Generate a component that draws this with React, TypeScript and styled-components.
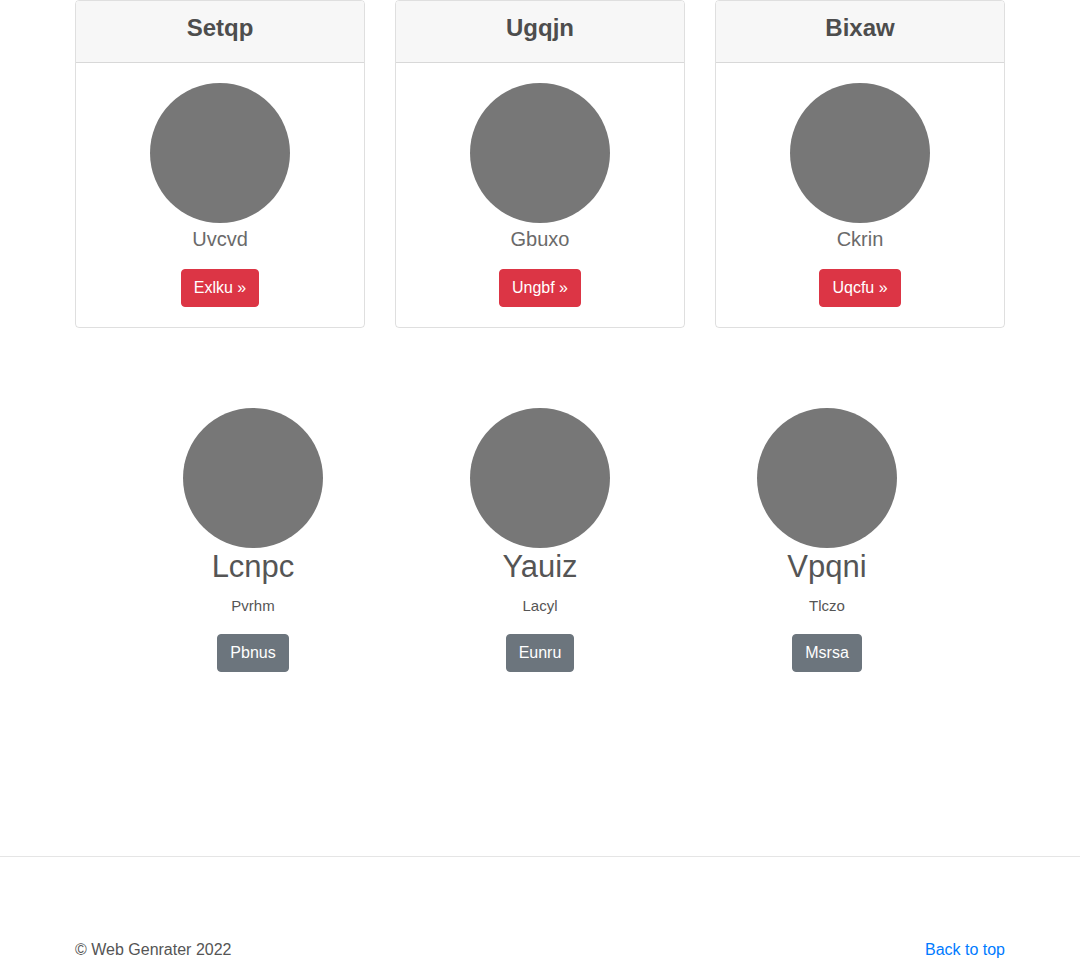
import React from 'react';
import styled, { createGlobalStyle } from 'styled-components';

const GlobalStyle = createGlobalStyle`
  html, body {
    margin: 0;
    padding: 0;
    background: #fff;
  }
  body {
    font-family: "Segoe UI", "Liberation Sans", Arial, sans-serif;
    font-size: 16px;
    line-height: 1.5;
    color: #555;
  }
  * {
    box-sizing: border-box;
  }
`;

const Container = styled.div`
  width: 960px;
  margin: 0 auto;
  padding: 0 15px;
`;

const CardDeck = styled.div`
  display: grid;
  grid-template-columns: repeat(3, 1fr);
  gap: 30px;
`;

const Card = styled.div`
  border: 1px solid rgba(0, 0, 0, 0.125);
  border-radius: 4px;
  overflow: hidden;
  text-align: center;
`;

const CardHeader = styled.div`
  background: #f7f7f7;
  border-bottom: 1px solid rgba(0, 0, 0, 0.125);
  padding: 13px 20px 11px;
`;

const CardTitle = styled.h4`
  margin: 0 0 8px;
  font-size: 24px;
  line-height: 1.2;
  font-weight: 700;
  color: #4d4d4d;
`;

const CardBody = styled.div`
  padding: 20px;
  display: flex;
  flex-direction: column;
  align-items: center;
`;

const Avatar = styled.div`
  width: 140px;
  height: 140px;
  border-radius: 50%;
  background: #777;
`;

const Lead = styled.p`
  margin: 0 0 16px;
  padding-top: 1px;
  height: 30px;
  font-size: 20px;
  line-height: 30px;
  font-weight: 300;
  color: #6a6a6a;
`;

const Button = styled.a<{ $variant: 'danger' | 'secondary' }>`
  display: inline-block;
  padding: 6px 12px;
  border: 1px solid ${p => (p.$variant === 'danger' ? '#dc3545' : '#6c757d')};
  border-radius: 4px;
  background: ${p => (p.$variant === 'danger' ? '#dc3545' : '#6c757d')};
  color: #fff;
  font-size: 16px;
  line-height: 1.5;
  text-decoration: none;
  cursor: pointer;
`;

const People = styled.div`
  display: grid;
  grid-template-columns: repeat(3, 287px);
  justify-content: center;
  margin-top: 80px;
`;

const Person = styled.div`
  display: flex;
  flex-direction: column;
  align-items: center;
  text-align: center;
`;

const PersonName = styled.h2`
  margin: 0 0 8px;
  font-size: 31px;
  line-height: 38px;
  font-weight: 400;
  color: #555;
`;

const PersonRole = styled.p`
  margin: 0 0 16px;
  font-size: 15px;
  line-height: 24px;
  color: #555;
`;

const Rule = styled.hr`
  margin: 184px 0 0;
  border: 0;
  border-top: 1px solid #e5e5e5;
`;

const Footer = styled.footer`
  display: flex;
  justify-content: space-between;
  padding: 81px 0 23px;
  font-size: 16px;
  color: #555;
`;

const TopLink = styled.a`
  color: #007bff;
  text-decoration: none;
`;

const cards = [
  { title: 'Setqp', name: 'Uvcvd', action: 'Exlku' },
  { title: 'Ugqjn', name: 'Gbuxo', action: 'Ungbf' },
  { title: 'Bixaw', name: 'Ckrin', action: 'Uqcfu' },
];

const people = [
  { name: 'Lcnpc', role: 'Pvrhm', action: 'Pbnus' },
  { name: 'Yauiz', role: 'Lacyl', action: 'Eunru' },
  { name: 'Vpqni', role: 'Tlczo', action: 'Msrsa' },
];

const App = () => {
  return (
    <>
      <GlobalStyle />
      <Container>
        <CardDeck>
          {cards.map(c => (
            <Card key={c.title}>
              <CardHeader>
                <CardTitle>{c.title}</CardTitle>
              </CardHeader>
              <CardBody>
                <Avatar />
                <Lead>{c.name}</Lead>
                <Button $variant="danger">{c.action} »</Button>
              </CardBody>
            </Card>
          ))}
        </CardDeck>
      </Container>

      <People>
        {people.map(p => (
          <Person key={p.name}>
            <Avatar />
            <PersonName>{p.name}</PersonName>
            <PersonRole>{p.role}</PersonRole>
            <Button $variant="secondary">{p.action}</Button>
          </Person>
        ))}
      </People>

      <Rule />
      <Container>
        <Footer>
          <span>© Web Genrater 2022</span>
          <TopLink href="#">Back to top</TopLink>
        </Footer>
      </Container>
    </>
  );
};

export default App;
